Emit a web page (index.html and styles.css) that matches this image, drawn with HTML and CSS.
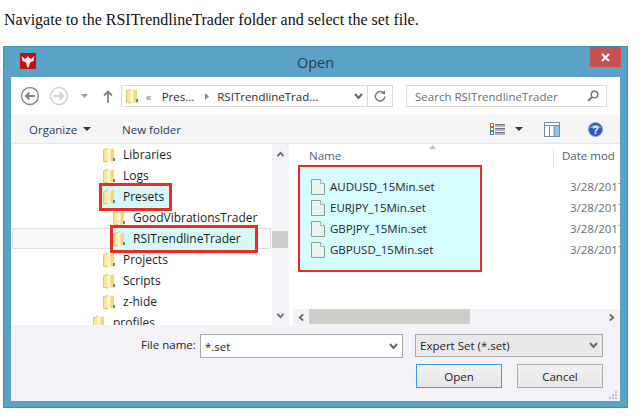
FILE: index.html
```html
<!DOCTYPE html>
<html lang="en">
<head>
<meta charset="utf-8">
<title>Open</title>
<link rel="stylesheet" href="styles.css">
</head>
<body>
<svg class="defs" width="0" height="0" aria-hidden="true">
  <defs>
    <linearGradient id="fg" x1="0" x2="1" y1="0" y2="0">
      <stop offset="0" stop-color="#f7e08e"/><stop offset="0.5" stop-color="#fdf2bd"/><stop offset="1" stop-color="#e3bd57"/>
    </linearGradient>
    <symbol id="folder" viewBox="0 0 14 16">
      <path d="M1 2.5 L5 1 L7 2 V14.5 L5 15.5 L1 14.5 Z" fill="#e8c766"/>
      <path d="M2 3 L6 2 H12 V14 H5 L2 14 Z" fill="url(#fg)"/>
      <path d="M8 2 L12 1.5 V14.5 H8 Z" fill="#f4d67c"/>
      <path d="M6 2.5 L8.5 2 V14.8 L6 15.5 Z" fill="#fff6cf"/>
      <rect x="11" y="11" width="2" height="3" fill="#4e86c0"/>
    </symbol>
    <symbol id="file" viewBox="0 0 14 16">
      <path d="M.5.5 H9.5 L13.5 4.5 V15.5 H.5 Z" fill="#eaf4ef" stroke="#8d9a99"/>
      <path d="M9.5.5 V4.5 H13.5" fill="#fff" stroke="#a5b0af"/>
    </symbol>
    <symbol id="chev" viewBox="0 0 9 7">
      <path d="M1 1 L4.5 5 L8 1" fill="none" stroke="#666" stroke-width="2"/>
    </symbol>
  </defs>
</svg>

<p class="intro">Navigate to the RSITrendlineTrader folder and select the set file.</p>

<div class="window">
  <header class="titlebar">
    <svg class="logo" width="16" height="16" viewBox="0 0 16 16">
      <rect width="16" height="16" rx="1" fill="#c00d12"/>
      <path d="M1.5 3 L5 6 L7 4.5 L8 3 L9 4.5 L11 6 L14.5 3 L13.5 8 L10 9.5 L9 13.5 L8 15 L7 13.5 L6 9.5 L2.5 8 Z" fill="#fbe9e6"/>
    </svg>
    <h1 class="title">Open</h1>
    <div class="close">
      <svg width="9" height="9" viewBox="0 0 9 9"><path d="M1 1 L8 8 M8 1 L1 8" stroke="#fff" stroke-width="2"/></svg>
    </div>
  </header>

  <div class="dialog">
    <div class="nav">
      <svg class="nav-btn" width="20" height="20" viewBox="0 0 20 20">
        <circle cx="10" cy="10" r="8.5" fill="#fff" stroke="#8a8a8a" stroke-width="1.4"/>
        <path d="M15 10 H6 M9.5 6.5 L6 10 L9.5 13.5" fill="none" stroke="#808080" stroke-width="2"/>
      </svg>
      <svg class="nav-btn fwd" width="20" height="20" viewBox="0 0 20 20">
        <circle cx="10" cy="10" r="8.5" fill="#fff" stroke="#d0d0d0" stroke-width="1.4"/>
        <path d="M5 10 H14 M10.5 6.5 L14 10 L10.5 13.5" fill="none" stroke="#cfcfcf" stroke-width="2"/>
      </svg>
      <svg class="nav-drop" width="7" height="4" viewBox="0 0 7 4"><path d="M0 0 H7 L3.500 4 Z" fill="#999"/></svg>
      <svg class="nav-up" width="10" height="13" viewBox="0 0 10 13"><path d="M5 13 V2 M1 5.500 L5 1.500 L9 5.500" fill="none" stroke="#808080" stroke-width="1.800"/></svg>
      <div class="address">
        <svg class="addr-folder" width="14" height="16"><use href="#folder"/></svg>
        <span class="crumb-more">«</span>
        <span class="crumb">Pres...</span>
        <svg class="crumb-sep" width="4" height="7" viewBox="0 0 4 7"><path d="M0 0 L4 3.500 L0 7 Z" fill="#8a8a8a"/></svg>
        <span class="crumb">RSITrendlineTrad...</span>
        <svg class="addr-chev" width="9" height="7"><use href="#chev"/></svg>
        <span class="addr-refresh">
          <svg width="12" height="12" viewBox="0 0 12 12"><path d="M9.500 3 A4.700 4.700 0 1 0 10.800 6.500" fill="none" stroke="#777" stroke-width="1.500"/><path d="M7 3.500 L11 4.500 L11 .5 Z" fill="#777"/></svg>
        </span>
      </div>
      <div class="search">
        <span class="search-text">Search RSITrendlineTrader</span>
        <svg width="12" height="12" viewBox="0 0 12 12"><circle cx="7.500" cy="4.500" r="3.300" fill="none" stroke="#777" stroke-width="1.500"/><path d="M5 7 L1 11" stroke="#777" stroke-width="2"/></svg>
      </div>
    </div>

    <div class="toolbar">
      <span class="tool">Organize</span>
      <svg class="tool-arrow" width="8" height="4" viewBox="0 0 8 4"><path d="M0 0 H8 L4 4 Z" fill="#1d3a5f"/></svg>
      <span class="tool new-folder">New folder</span>
      <svg class="views" width="15" height="12" viewBox="0 0 15 12">
        <rect x=".5" y=".5" width="3" height="3" fill="#fff" stroke="#c8603f"/>
        <rect x=".5" y="4.500" width="3" height="3" fill="#fff" stroke="#5b9b5b"/>
        <rect x=".5" y="8.500" width="3" height="3" fill="#fff" stroke="#3f74c8"/>
        <path d="M5 1.500 H15 M5 3 H15 M5 5.500 H15 M5 7 H15 M5 9.500 H15 M5 11 H15" stroke="#6b7480"/>
      </svg>
      <svg class="views-arrow" width="8" height="4" viewBox="0 0 8 4"><path d="M0 0 H8 L4 4 Z" fill="#1d3a5f"/></svg>
      <svg class="pane-icon" width="16" height="15" viewBox="0 0 16 15">
        <rect x=".5" y=".5" width="15" height="14" fill="#fff" stroke="#7d8a97"/>
        <rect x="10" y="3" width="5" height="11" fill="#8cc4f2"/>
        <path d="M1 3.500 H15 M5.500 3.500 V14 M10 3.500 V14" stroke="#7d8a97"/>
      </svg>
      <svg class="help" width="15" height="15" viewBox="0 0 15 15">
        <circle cx="7.500" cy="7.500" r="7" fill="#2a59c4" stroke="#9aa3b5"/>
        <path d="M2 6 A6 5 0 0 1 13 6 Z" fill="#7fa6ea"/>
        <text x="7.500" y="11.500" class="help-q">?</text>
      </svg>
    </div>

    <div class="panes">
      <div class="tree">
        <div class="row lvl1"><svg class="ico" width="14" height="16"><use href="#folder"/></svg><span>Libraries</span></div>
        <div class="row lvl1"><svg class="ico" width="14" height="16"><use href="#folder"/></svg><span>Logs</span></div>
        <div class="row lvl1"><span class="mark mark-presets"><svg class="ico" width="14" height="16"><use href="#folder"/></svg><span>Presets</span></span></div>
        <div class="row lvl2"><svg class="ico" width="14" height="16"><use href="#folder"/></svg><span>GoodVibrationsTrader</span></div>
        <div class="row lvl2 current"><span class="mark mark-rsi"><svg class="ico" width="14" height="16"><use href="#folder"/></svg><span>RSITrendlineTrader</span></span></div>
        <div class="row lvl1"><svg class="ico" width="14" height="16"><use href="#folder"/></svg><span>Projects</span></div>
        <div class="row lvl1"><svg class="ico" width="14" height="16"><use href="#folder"/></svg><span>Scripts</span></div>
        <div class="row lvl1"><svg class="ico" width="14" height="16"><use href="#folder"/></svg><span>z-hide</span></div>
        <div class="row lvl0"><svg class="ico" width="14" height="16"><use href="#folder"/></svg><span>profiles</span></div>
      </div>
      <div class="vscroll">
        <svg width="9" height="6" viewBox="0 0 9 7"><path d="M1 6 L4.500 2 L8 6" fill="none" stroke="#666" stroke-width="2"/></svg>
        <div class="vthumb"></div>
        <svg width="9" height="6"><use href="#chev"/></svg>
      </div>
      <div class="files">
        <div class="columns">
          <svg class="sort" width="7" height="4" viewBox="0 0 7 4"><path d="M0 4 L3.500 0 L7 4 Z" fill="#a9c6de"/></svg>
          <span class="col-name">Name</span>
          <span class="col-date">Date mod</span>
        </div>
        <div class="file-body">
          <div class="selection">
            <div class="file"><svg class="file-ico" width="14" height="16"><use href="#file"/></svg><span>AUDUSD_15Min.set</span></div>
            <div class="file"><svg class="file-ico" width="14" height="16"><use href="#file"/></svg><span>EURJPY_15Min.set</span></div>
            <div class="file"><svg class="file-ico" width="14" height="16"><use href="#file"/></svg><span>GBPJPY_15Min.set</span></div>
            <div class="file"><svg class="file-ico" width="14" height="16"><use href="#file"/></svg><span>GBPUSD_15Min.set</span></div>
          </div>
          <div class="dates">
            <span>3/28/2017</span><span>3/28/2017</span><span>3/28/2017</span><span>3/28/2017</span>
          </div>
        </div>
        <div class="hscroll">
          <svg width="6" height="9" viewBox="0 0 7 9"><path d="M6 1 L2 4.500 L6 8" fill="none" stroke="#666" stroke-width="2"/></svg>
          <div class="hthumb"></div>
          <svg class="hnext" width="6" height="9" viewBox="0 0 7 9"><path d="M1 1 L5 4.500 L1 8" fill="none" stroke="#666" stroke-width="2"/></svg>
        </div>
      </div>
    </div>

    <div class="footer">
      <div class="field-row">
        <span class="field-label">File name:</span>
        <div class="name-input"><span>*.set</span><svg width="9" height="7"><use href="#chev"/></svg></div>
        <div class="type-select"><span>Expert Set (*.set)</span><svg width="9" height="7"><use href="#chev"/></svg></div>
      </div>
      <div class="button-row">
        <button class="btn btn-default">Open</button>
        <button class="btn">Cancel</button>
      </div>
      <svg class="grip" width="8" height="8" viewBox="0 0 8 8"><path d="M6 0h2v2H6z M3 3h2v2H3z M6 3h2v2H6z M0 6h2v2H0z M3 6h2v2H3z M6 6h2v2H6z" fill="#c4c4c4"/></svg>
    </div>
  </div>
</div>
</body>
</html>
```

FILE: styles.css
```css
* { box-sizing: border-box; }
html, body { margin: 0; padding: 0; background: #fff; }
body { width: 640px; height: 418px; overflow: hidden; font-family: "Open Sans", "Noto Sans", sans-serif; font-size: 12px; color: #1c1c1c; }
.defs { display: block; height: 0; }

.intro { margin: 0; padding: 10px 0 0 4px; height: 46px; font: 16px/19px "Liberation Serif", serif; color: #111; }

.window { position: relative; margin-left: 3px; width: 625px; height: 362px; padding: 0 7px 6px; background: #5ba3c6; border: 1px solid #4b8cab; }

.titlebar { position: relative; height: 30px; display: flex; align-items: center; justify-content: center; }
.logo { position: absolute; left: 9px; top: 6px; }
.title { margin: 0; padding-top: 1px; font-size: 14.500px; font-weight: 400; color: #2c3b44; }
.close { position: absolute; right: -1px; top: 0; width: 31px; height: 20px; background: #c75050; display: flex; align-items: center; justify-content: center; }

.dialog { background: #f4f2f6; height: 324px; display: flex; flex-direction: column; }

.nav { height: 38px; background: #fff; display: flex; align-items: center; padding: 0 13px 0 9px; flex: none; }
.nav-btn { margin-right: 9px; }
.nav-btn.fwd { margin-right: 12px; }
.nav-drop { margin-right: 15px; }
.nav-up { margin-right: 8px; }
.address { width: 274px; height: 22px; border: 1px solid #d9d9d9; display: flex; align-items: center; padding-left: 3px; margin-right: 13px; }
.addr-folder { margin-right: 7px; }
.crumb-more { color: #777; width: 16px; font-size: 11px; }
.crumb { color: #2b2b2b; font-size: 11.500px; }
.crumb-sep { margin: 0 8px 0 11px; }
.addr-chev { margin-left: auto; margin-right: 4px; }
.addr-refresh { width: 25px; height: 20px; border-left: 1px solid #d9d9d9; display: flex; align-items: center; justify-content: center; }
.search { width: 202px; height: 22px; border: 1px solid #d9d9d9; display: flex; align-items: center; justify-content: space-between; padding: 0 7px 0 8px; }
.search-text { color: #6d6d6d; font-size: 11.500px; }

.toolbar { height: 29px; flex: none; background: #f5f5f5; border-bottom: 1px solid #e6e6e6; display: flex; align-items: center; padding-left: 18px; }
.tool { color: #1d3a5f; font-size: 11.500px; }
.tool-arrow { margin-left: 6px; }
.new-folder { margin-left: 31px; }
.views { margin-left: auto; }
.views-arrow { margin-left: 10px; }
.pane-icon { margin-left: 21px; }
.help { margin: 0 17px 0 28px; }
.help-q { font: bold 10px "Liberation Sans", sans-serif; fill: #fff; text-anchor: middle; }

.panes { flex: none; height: 181px; display: flex; background: #fff; }
.tree { width: 261px; height: 181px; overflow: hidden; padding-top: 0; }
.row { height: 21px; display: flex; align-items: center; gap: 7px; margin-right: 1px; }
.lvl0 { padding-left: 81px; }
.lvl1 { padding-left: 91px; }
.lvl2 { padding-left: 101px; }
.current { background: #f8f8f8; box-shadow: inset 0 0 0 1px #dedede; margin-left: 1px; padding-left: 100px; }
.mark { display: flex; align-items: center; gap: 7px; height: 22px; background: #d6f8f6; outline: 3px solid #ee2a24; outline-offset: -1px; position: relative; }
.mark-presets { margin-left: -1px; padding: 0 2px 0 1px; width: 69px; height: 24px; }
.mark-rsi { margin-left: 0; padding-right: 12px; width: 144px; height: 24px; }
.ico { flex: none; }

.vscroll { width: 17px; background: #f4f2f6; display: flex; flex-direction: column; align-items: center; justify-content: space-between; padding: 7px 0 6px; position: relative; }
.vthumb { position: absolute; left: 0; top: 87px; width: 16px; height: 17px; background: #cdcdcd; }

.files { flex: 1; min-width: 0; display: flex; flex-direction: column; overflow: hidden; margin-left: 4px; }
.columns { position: relative; height: 21px; flex: none; }
.sort { position: absolute; left: 136px; top: 1px; }
.col-name { position: absolute; left: 16px; top: 4px; color: #4c607a; font-size: 11.500px; }
.col-date { position: absolute; left: 268px; top: 4px; padding-left: 8px; margin-left: -8px; white-space: nowrap; color: #4c607a; font-size: 11.500px; border-left: 1px solid #dbe6ef; height: 20px; }
.file-body { flex: 1; display: flex; min-height: 0; }
.selection { margin-left: 5px; margin-top: 0; width: 184px; height: 107px; border: 3px solid #ee2a24; border-width: 2.500px; background: #d6fdfd; padding-top: 9px; flex: none; }
.file { height: 21px; display: flex; align-items: center; gap: 5px; padding-left: 11px; color: #16233b; font-size: 11.500px; }
.dates { margin-left: 88px; padding-top: 11px; display: flex; flex-direction: column; white-space: nowrap; color: #6d6d6d; font-size: 11.500px; }
.dates span { height: 21px; line-height: 21px; }
.hscroll { height: 16px; flex: none; background: #f4f2f6; display: flex; align-items: center; position: relative; padding: 0 5px; margin-bottom: 0; }
.hthumb { position: absolute; left: 16px; top: 0; width: 161px; height: 15px; background: #cdcdc9; }
.hnext { margin-left: auto; }

.footer { position: relative; flex: 1; padding: 9px 17px 0 0; }
.field-row { display: flex; align-items: flex-start; height: 30px; }
.field-label { margin-left: 130px; width: 59px; padding-top: 3px; font-size: 11.500px; }
.name-input { width: 203px; height: 24px; background: #fff; border: 1px solid #ababab; display: flex; align-items: center; justify-content: space-between; padding: 0 4px; font-size: 11.500px; }
.type-select { margin-left: 12px; width: 188px; height: 23px; background: #e9e9e9; border: 1px solid #ababab; display: flex; align-items: center; justify-content: space-between; padding: 0 4px; font-size: 11.500px; }
.button-row { display: flex; justify-content: flex-end; gap: 15px; }
.btn { width: 86px; height: 24px; padding: 0; background: linear-gradient(#f2f2f2, #e6e6e6); border: 1px solid #acacac; font: 11.500px "Open Sans", "Noto Sans", sans-serif; color: #1c1c1c; }
.btn-default { border-color: #3a9be8; }
.grip { position: absolute; right: 3px; bottom: 2px; }
```
